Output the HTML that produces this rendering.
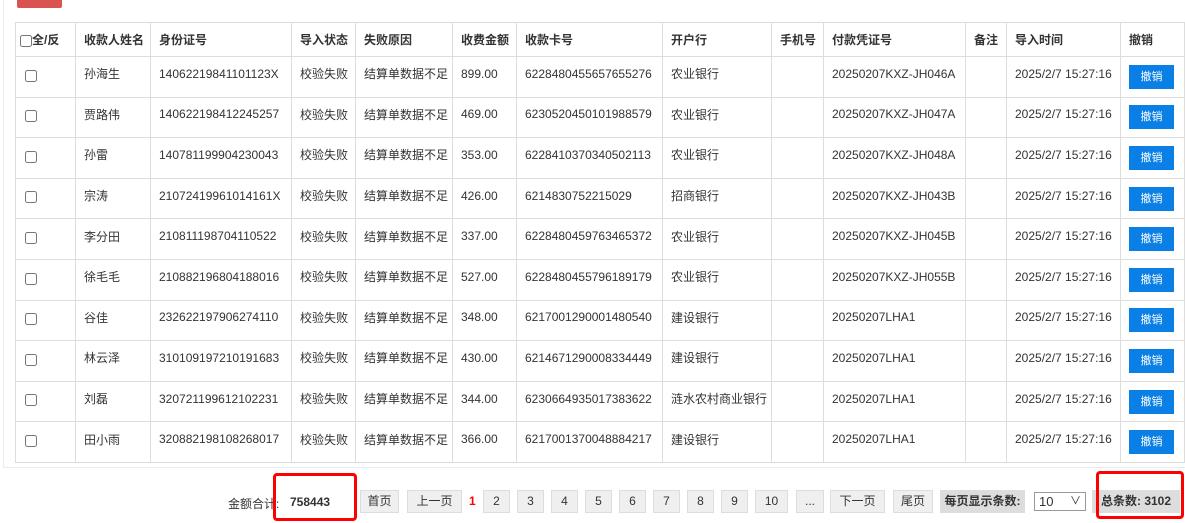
<!DOCTYPE html>
<html><head><meta charset="utf-8"><style>
*{box-sizing:border-box;margin:0;padding:0}
body{width:1185px;height:523px;background:#fff;font-family:"Liberation Sans","Noto Sans CJK SC",sans-serif;font-size:12px;color:#333;position:relative;overflow:hidden}
.cont{position:absolute;left:3px;top:-2px;width:1190px;height:470px;border:1px solid #e6ecf0;border-top:none}
.del{position:absolute;left:17px;top:-6px;width:45px;height:14px;background:#d9534f;border-radius:2px}
table{position:absolute;left:15px;top:22px;border-collapse:collapse;table-layout:fixed;width:1169px}
td,th{border:1px solid #ddd;padding:0 8px;text-align:left;white-space:nowrap;overflow:hidden;font-size:12px}
th{height:34px;font-weight:bold;color:#333}
td{height:40.6px;padding-bottom:6px}
td:last-child{padding-bottom:0}
th:first-child{padding:0 0 0 4px}
td:first-child{padding-left:9px;padding-bottom:4px}
input[type=checkbox]{width:12px;height:12px;vertical-align:middle;margin:0}
.b{display:inline-block;background:#0a7fe6;color:#fff;width:45px;height:24px;line-height:24px;text-align:center;font-size:11px}
.p{position:absolute;top:490px;height:23px;line-height:21px;background:#efefef;border:1px solid #ddd;text-align:center;font-size:12px;color:#333}
.red{position:absolute;border:3px solid #f00;border-radius:4px}
</style></head><body>
<div class="cont"></div>
<div class="del"></div>
<table>
<colgroup><col style="width:60px"><col style="width:75px"><col style="width:141px"><col style="width:64px"><col style="width:97px"><col style="width:64px"><col style="width:146px"><col style="width:109px"><col style="width:52px"><col style="width:142px"><col style="width:41px"><col style="width:114px"><col style="width:64px"></colgroup>
<tr><th><input type="checkbox">全/反</th><th>收款人姓名</th><th>身份证号</th><th>导入状态</th><th>失败原因</th><th>收费金额</th><th>收款卡号</th><th>开户行</th><th>手机号</th><th>付款凭证号</th><th>备注</th><th>导入时间</th><th>撤销</th></tr>
<tr><td><input type="checkbox"></td><td>孙海生</td><td>14062219841101123X</td><td>校验失败</td><td>结算单数据不足</td><td>899.00</td><td>6228480455657655276</td><td>农业银行</td><td></td><td>20250207KXZ-JH046A</td><td></td><td>2025/2/7 15:27:16</td><td><span class="b">撤销</span></td></tr>
<tr><td><input type="checkbox"></td><td>贾路伟</td><td>140622198412245257</td><td>校验失败</td><td>结算单数据不足</td><td>469.00</td><td>6230520450101988579</td><td>农业银行</td><td></td><td>20250207KXZ-JH047A</td><td></td><td>2025/2/7 15:27:16</td><td><span class="b">撤销</span></td></tr>
<tr><td><input type="checkbox"></td><td>孙雷</td><td>140781199904230043</td><td>校验失败</td><td>结算单数据不足</td><td>353.00</td><td>6228410370340502113</td><td>农业银行</td><td></td><td>20250207KXZ-JH048A</td><td></td><td>2025/2/7 15:27:16</td><td><span class="b">撤销</span></td></tr>
<tr><td><input type="checkbox"></td><td>宗涛</td><td>21072419961014161X</td><td>校验失败</td><td>结算单数据不足</td><td>426.00</td><td>6214830752215029</td><td>招商银行</td><td></td><td>20250207KXZ-JH043B</td><td></td><td>2025/2/7 15:27:16</td><td><span class="b">撤销</span></td></tr>
<tr><td><input type="checkbox"></td><td>李分田</td><td>210811198704110522</td><td>校验失败</td><td>结算单数据不足</td><td>337.00</td><td>6228480459763465372</td><td>农业银行</td><td></td><td>20250207KXZ-JH045B</td><td></td><td>2025/2/7 15:27:16</td><td><span class="b">撤销</span></td></tr>
<tr><td><input type="checkbox"></td><td>徐毛毛</td><td>210882196804188016</td><td>校验失败</td><td>结算单数据不足</td><td>527.00</td><td>6228480455796189179</td><td>农业银行</td><td></td><td>20250207KXZ-JH055B</td><td></td><td>2025/2/7 15:27:16</td><td><span class="b">撤销</span></td></tr>
<tr><td><input type="checkbox"></td><td>谷佳</td><td>232622197906274110</td><td>校验失败</td><td>结算单数据不足</td><td>348.00</td><td>6217001290001480540</td><td>建设银行</td><td></td><td>20250207LHA1</td><td></td><td>2025/2/7 15:27:16</td><td><span class="b">撤销</span></td></tr>
<tr><td><input type="checkbox"></td><td>林云泽</td><td>310109197210191683</td><td>校验失败</td><td>结算单数据不足</td><td>430.00</td><td>6214671290008334449</td><td>建设银行</td><td></td><td>20250207LHA1</td><td></td><td>2025/2/7 15:27:16</td><td><span class="b">撤销</span></td></tr>
<tr><td><input type="checkbox"></td><td>刘磊</td><td>320721199612102231</td><td>校验失败</td><td>结算单数据不足</td><td>344.00</td><td>6230664935017383622</td><td>涟水农村商业银行</td><td></td><td>20250207LHA1</td><td></td><td>2025/2/7 15:27:16</td><td><span class="b">撤销</span></td></tr>
<tr><td><input type="checkbox"></td><td>田小雨</td><td>320882198108268017</td><td>校验失败</td><td>结算单数据不足</td><td>366.00</td><td>6217001370048884217</td><td>建设银行</td><td></td><td>20250207LHA1</td><td></td><td>2025/2/7 15:27:16</td><td><span class="b">撤销</span></td></tr>
</table>
<div style="position:absolute;left:228px;top:495px">金额合计:</div>
<div style="position:absolute;left:290px;top:495px;font-weight:bold">758443</div>
<div class="p" style="left:360px;width:39px">首页</div>
<div class="p" style="left:407px;width:55px">上一页</div>
<div style="position:absolute;left:469px;top:494px;color:#f00;font-weight:bold">1</div>
<div class="p" style="left:483px;width:27px">2</div>
<div class="p" style="left:517px;width:27px">3</div>
<div class="p" style="left:551px;width:27px">4</div>
<div class="p" style="left:585px;width:27px">5</div>
<div class="p" style="left:619px;width:27px">6</div>
<div class="p" style="left:653px;width:27px">7</div>
<div class="p" style="left:687px;width:27px">8</div>
<div class="p" style="left:721px;width:27px">9</div>
<div class="p" style="left:755px;width:33px">10</div>
<div class="p" style="left:796px;width:28px">...</div>
<div class="p" style="left:830px;width:55px">下一页</div>
<div class="p" style="left:893px;width:40px">尾页</div>
<div class="p" style="left:940px;width:85px;background:#ddd;border:none;font-weight:bold;line-height:23px">每页显示条数:</div>
<div style="position:absolute;left:1034px;top:492px;width:52px;height:19px;border:1px solid #999;background:#fff;font-size:13px;padding-left:4px;line-height:17px">10<span style="position:absolute;right:4px;font-size:11px">∨</span></div>
<div class="p" style="left:1092px;width:88px;background:#ddd;border:none;font-weight:bold;line-height:23px">总条数: 3102</div>
<div class="red" style="left:273px;top:473px;width:84px;height:48px"></div>
<div class="red" style="left:1096px;top:471px;width:88px;height:48px"></div>
</body></html>
